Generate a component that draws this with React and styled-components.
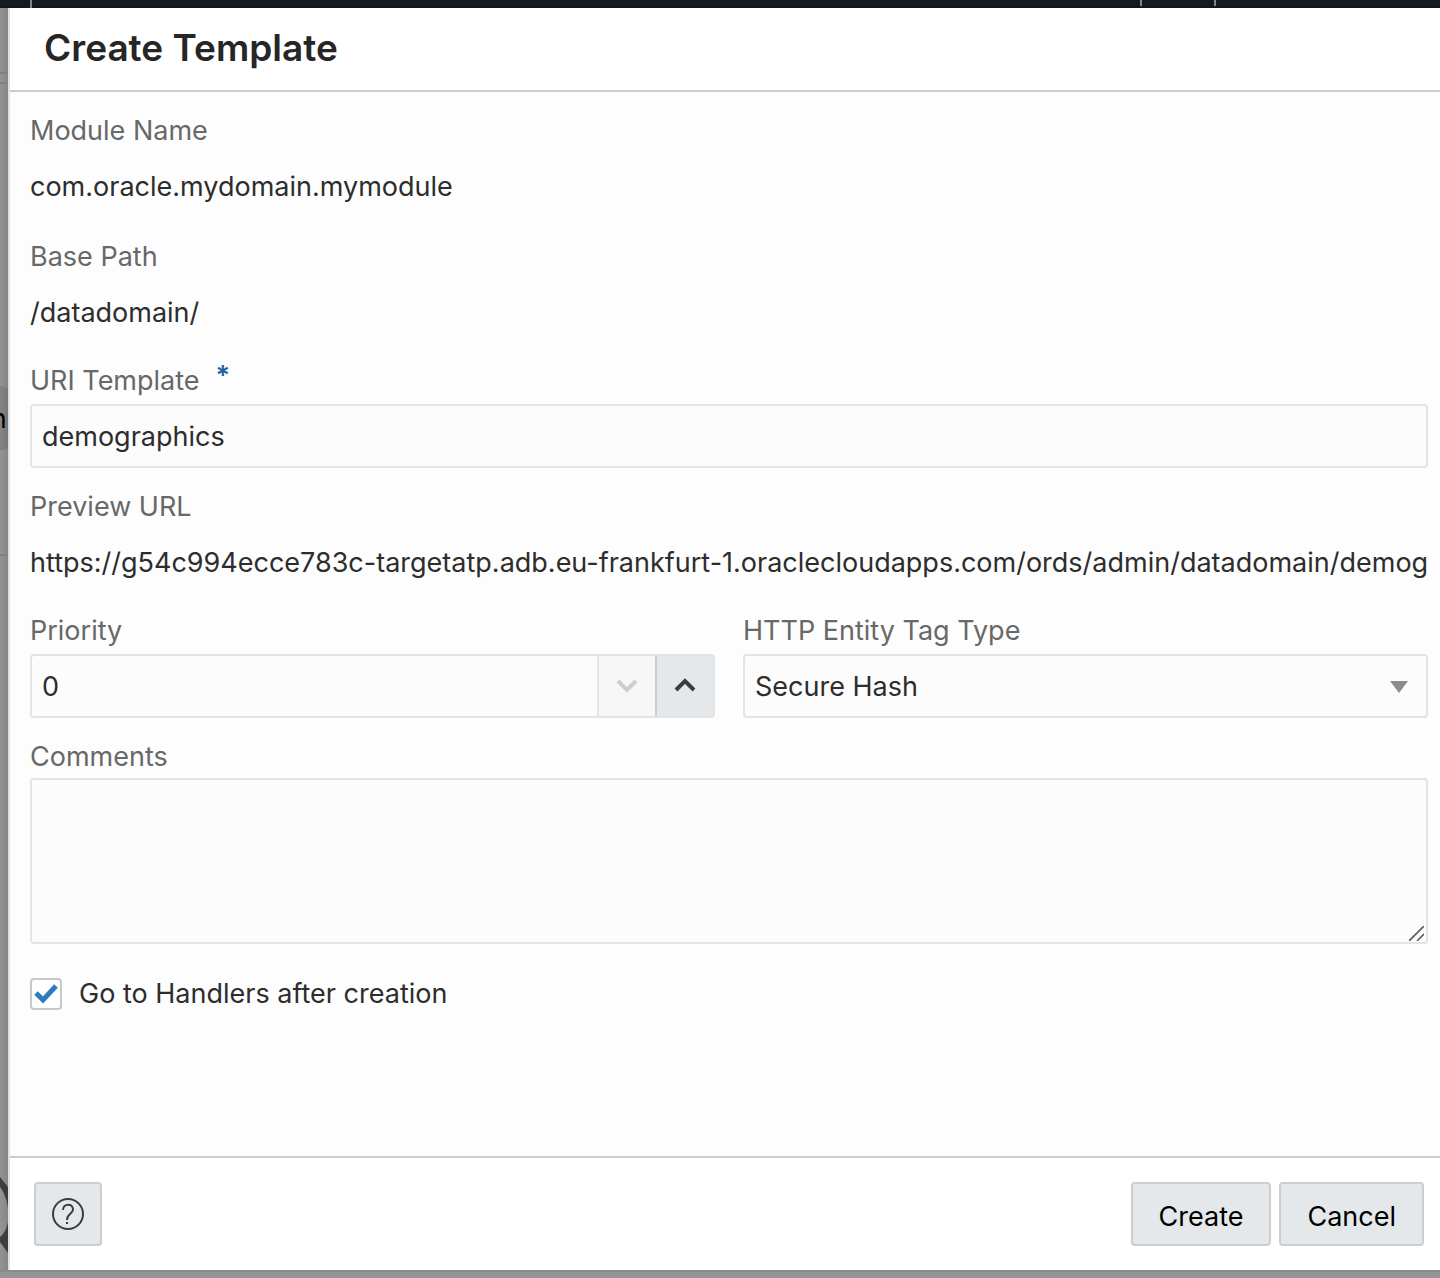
import React, { useState } from "react";
import styled, { createGlobalStyle } from "styled-components";

const GlobalStyle = createGlobalStyle`
  *, *::before, *::after { box-sizing: border-box; }
  body {
    margin: 0;
    background: #949494;
    color: #2d2d2d;
    font-family: Inter, "Liberation Sans", Arial, sans-serif;
  }
  button, input, select, textarea { font: inherit; color: inherit; }
`;

const Page = styled.div`
  display: flex;
  flex-direction: column;
  min-height: 100vh;
  padding-bottom: 8px;
  background: linear-gradient(#8a8a8a, #8a8a8a) bottom 6px left / 100% 2px no-repeat, #949494;
`;

const TopBar = styled.header`
  display: flex;
  flex: none;
  height: 8px;
  padding: 0 224px 0 30px;
  background: #151a22;
  border-bottom: 1px solid #11141b;
`;

const TopDivider = styled.span`
  width: 2px;
  height: ${(p) => (p.$tall ? "8px" : "6px")};
  margin-left: ${(p) => (p.$push ? "auto" : "0")};
  margin-right: ${(p) => (p.$gap ? "72px" : "0")};
  background: #858585;
`;

const Workspace = styled.div`
  display: flex;
  flex: 1;
`;

const Backdrop = styled.div`
  display: flex;
  flex: none;
  flex-direction: column;
  width: 8px;
  overflow: hidden;
  background: linear-gradient(to right, #949494, #868686);
`;

const Strip = styled.div`
  flex: none;
  height: ${(p) => p.$height}px;
  border-bottom: 2px solid ${(p) => p.$line || "#808080"};
`;

const ActiveStrip = styled(Strip)`
  display: flex;
  justify-content: flex-end;
  background: linear-gradient(to right, #858585, #777777);
  color: #000;
  font-size: 27px;
  line-height: 62px;
`;

const ClippedText = styled.span`
  margin-right: -11px;
`;

const BackdropIcon = styled.svg`
  flex: none;
  width: 8px;
  height: 80px;
  margin-top: auto;
  margin-bottom: 14px;
`;

const Dialog = styled.section`
  display: flex;
  flex: 1;
  flex-direction: column;
  min-width: 0;
  border-left: 2px solid #e0e0e0;
  background: #fdfdfd;
`;

const DialogHeader = styled.header`
  padding: 16px 34px 18px;
  border-bottom: 2px solid #cbcbcb;
  background: #fff;
`;

const Title = styled.h1`
  margin: 0;
  color: #262626;
  font-size: 37px;
  font-weight: 600;
  line-height: 48px;
`;

const Form = styled.form`
  display: flex;
  flex: 1;
  flex-direction: column;
  gap: 18px;
  padding: 20px 12px 0 20px;
  font-size: 27px;
`;

const Group = styled.div`
  display: flex;
  flex-direction: column;
  gap: 20px;
`;

const Columns = styled.div`
  display: grid;
  grid-template-columns: 1fr 1fr;
  gap: 28px;
`;

const Field = styled.div`
  display: flex;
  flex-direction: column;
  gap: ${(p) => (p.$dense ? "2px" : "4px")};
  min-width: 0;
`;

const Label = styled.label`
  display: flex;
  gap: 16px;
  color: #686868;
  line-height: 38px;
`;

const Required = styled.span`
  color: #22629f;
  font-weight: 600;
  line-height: 28px;
`;

const Value = styled.output`
  overflow: hidden;
  padding-top: 2px;
  line-height: 62px;
  white-space: nowrap;
`;

const TextInput = styled.input`
  width: 100%;
  min-width: 0;
  height: 64px;
  padding: 0 10px;
  border: 2px solid #e4e4e4;
  border-radius: 4px;
  background: #fcfcfc;
  outline: none;
`;

const Spinner = styled.div`
  display: flex;
  height: 64px;
  border: 2px solid #e4e4e4;
  border-radius: 4px;
  background: #fcfcfc;
  overflow: hidden;
`;

const SpinnerInput = styled.input`
  flex: 1;
  min-width: 0;
  padding: 0 10px;
  border: 0;
  background: transparent;
  outline: none;
`;

const SpinnerButton = styled.button`
  display: grid;
  place-items: center;
  width: 58px;
  padding: 0;
  border: 0;
  border-left: 2px solid ${(p) => (p.$muted ? "#e4e4e4" : "#cbcdce")};
  background: ${(p) => (p.$muted ? "#f7f7f7" : "#e4e8eb")};
  color: ${(p) => (p.$muted ? "#cccecf" : "#3c3c3c")};
`;

const Stack = styled.div`
  display: grid;
  > * { grid-area: 1 / 1; }
  > svg {
    place-self: ${(p) => p.$place};
    margin: ${(p) => p.$inset || "0"};
    pointer-events: none;
  }
`;

const Select = styled.select`
  width: 100%;
  height: 64px;
  padding: 0 48px 0 10px;
  border: 2px solid #e4e4e4;
  border-radius: 4px;
  background: #fcfcfc;
  appearance: none;
  outline: none;
`;

const TextArea = styled.textarea`
  display: block;
  width: 100%;
  height: 166px;
  padding: 10px;
  border: 2px solid #e4e4e4;
  border-radius: 4px;
  background: #fcfcfc;
  resize: none;
  outline: none;
`;

const CheckRow = styled.label`
  display: flex;
  align-items: center;
  gap: 17px;
  margin-top: 16px;
  line-height: 32px;
`;

const CheckBox = styled.input`
  width: 32px;
  height: 32px;
  margin: 0;
  border: 2px solid #c8c8c8;
  border-radius: 4px;
  background: #fff;
  appearance: none;
  &:not(:checked) + svg { display: none; }
`;

const DialogFooter = styled.footer`
  display: flex;
  gap: 8px;
  padding: 24px 16px 24px 24px;
  border-top: 2px solid #cbcbcb;
  background: #fff;
`;

const Button = styled.button`
  display: grid;
  place-items: center;
  height: 64px;
  padding: 4px 26px 0;
  border: 2px solid #cbcdce;
  border-radius: 4px;
  background: #e4e8eb;
  color: #000;
  font-size: 27px;
`;

const HelpButton = styled(Button)`
  width: 68px;
  margin-right: auto;
  padding: 0;
  color: #3c3c3c;
`;

export default function App() {
  const [uri, setUri] = useState("demographics");
  const [priority, setPriority] = useState(0);
  const [goTo, setGoTo] = useState(true);

  return (
    <>
      <GlobalStyle />
      <Page>
        <TopBar>
          <TopDivider $tall />
          <TopDivider $push $gap />
          <TopDivider />
        </TopBar>
        <Workspace>
          <Backdrop aria-hidden="true">
            <Strip $height={66} $line="#7d8184" />
            <Strip $height={10} />
            <Strip $height={304} $line="#858585" />
            <ActiveStrip $height={62}>
              <ClippedText>n-</ClippedText>
            </ActiveStrip>
            <Strip $height={106} />
            <BackdropIcon viewBox="0 0 8 80" fill="#3d3d3d">
              <path d="M0 1L8 11V32C7 24 4 16 0 11Z" />
              <path d="M8 46C7 52 4 58 0 61V66L8 77Z" />
            </BackdropIcon>
          </Backdrop>
          <Dialog role="dialog" aria-labelledby="dialog-title">
            <DialogHeader>
              <Title id="dialog-title">Create Template</Title>
            </DialogHeader>
            <Form id="template-form" onSubmit={(e) => e.preventDefault()}>
              <Group>
                <Field>
                  <Label htmlFor="module">Module Name</Label>
                  <Value id="module">com.oracle.mydomain.mymodule</Value>
                </Field>
                <Field>
                  <Label htmlFor="base">Base Path</Label>
                  <Value id="base">/datadomain/</Value>
                </Field>
              </Group>
              <Group>
                <Field>
                  <Label htmlFor="uri">
                    URI Template <Required>*</Required>
                  </Label>
                  <TextInput id="uri" required value={uri} onChange={(e) => setUri(e.target.value)} />
                </Field>
                <Field>
                  <Label htmlFor="preview">Preview URL</Label>
                  <Value id="preview">
                    https://g54c994ecce783c-targetatp.adb.eu-frankfurt-1.oraclecloudapps.com/ords/admin/datadomain/{uri}
                  </Value>
                </Field>
              </Group>
              <Group>
                <Columns>
                  <Field>
                    <Label htmlFor="priority">Priority</Label>
                    <Spinner>
                      <SpinnerInput
                        id="priority"
                        inputMode="numeric"
                        value={priority}
                        onChange={(e) => setPriority(Number(e.target.value) || 0)}
                      />
                      <SpinnerButton
                        type="button"
                        aria-label="Decrease priority"
                        $muted
                        disabled={priority === 0}
                        onClick={() => setPriority(priority - 1)}
                      >
                        <svg width="22" height="16" viewBox="0 0 22 16" fill="none" stroke="currentColor" strokeWidth="4">
                          <path d="M2 3L11 12L20 3" />
                        </svg>
                      </SpinnerButton>
                      <SpinnerButton
                        type="button"
                        aria-label="Increase priority"
                        onClick={() => setPriority(priority + 1)}
                      >
                        <svg width="22" height="16" viewBox="0 0 22 16" fill="none" stroke="currentColor" strokeWidth="4">
                          <path d="M2 12L11 3L20 12" />
                        </svg>
                      </SpinnerButton>
                    </Spinner>
                  </Field>
                  <Field>
                    <Label htmlFor="etag">HTTP Entity Tag Type</Label>
                    <Stack $place="center end" $inset="2px 20px 0 0">
                      <Select id="etag" defaultValue="Secure Hash">
                        <option>Secure Hash</option>
                        <option>Query</option>
                        <option>None</option>
                      </Select>
                      <svg width="18" height="12" viewBox="0 0 18 12" fill="#8b8c8e">
                        <path d="M0 0H18L9 12Z" />
                      </svg>
                    </Stack>
                  </Field>
                </Columns>
                <Field $dense>
                  <Label htmlFor="comments">Comments</Label>
                  <Stack $place="end" $inset="0 4px 3px 0">
                    <TextArea id="comments" />
                    <svg width="15" height="15" viewBox="0 0 15 15" stroke="#5c5c5c" strokeWidth="1.6">
                      <path d="M0 15L15 0M8 15L15 8" />
                    </svg>
                  </Stack>
                </Field>
              </Group>
              <CheckRow>
                <Stack $place="center">
                  <CheckBox type="checkbox" checked={goTo} onChange={(e) => setGoTo(e.target.checked)} />
                  <svg width="24" height="20" viewBox="0 0 24 20" fill="none" stroke="#2f7bc0" strokeWidth="5">
                    <path d="M2 9L9 16L22 2" />
                  </svg>
                </Stack>
                Go to Handlers after creation
              </CheckRow>
            </Form>
            <DialogFooter>
              <HelpButton type="button" aria-label="Help">
                <svg width="32" height="32" viewBox="0 0 32 32" fill="none" stroke="currentColor" strokeWidth="2">
                  <circle cx="16" cy="16" r="15" />
                  <path d="M11 12C11 5 21 5 21 11.500C21 15.500 15 16 15 22" />
                  <path d="M15 24V26" />
                </svg>
              </HelpButton>
              <Button type="submit" form="template-form">Create</Button>
              <Button type="button">Cancel</Button>
            </DialogFooter>
          </Dialog>
        </Workspace>
      </Page>
    </>
  );
}
